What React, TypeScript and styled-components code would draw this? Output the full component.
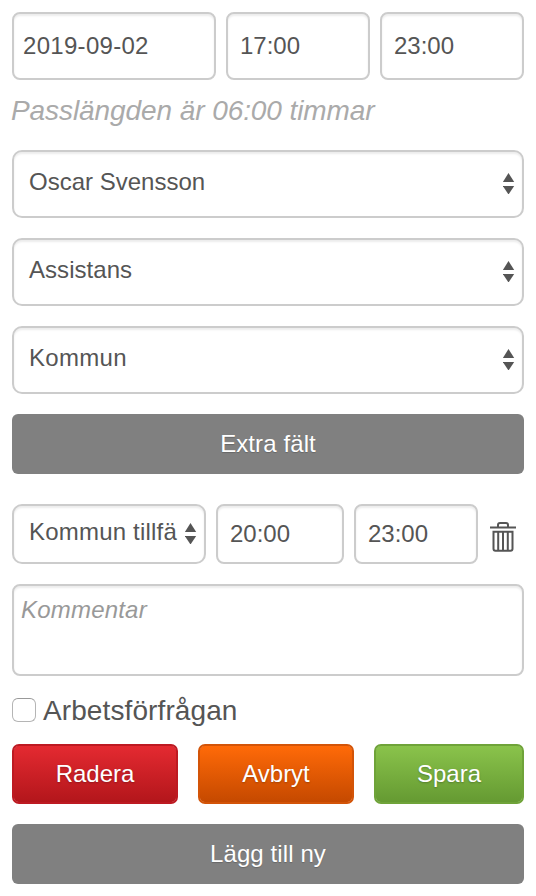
import styled, { createGlobalStyle } from 'styled-components';

const GlobalStyle = createGlobalStyle`
  * {
    box-sizing: border-box;
  }

  body {
    margin: 0;
    background: #fff;
    color: #555;
    font-family: 'Liberation Sans', Arial, sans-serif;
    font-size: 24px;
  }
`;

const Form = styled.form`
  display: flex;
  flex-direction: column;
  width: 536px;
  height: 896px;
  padding: 12px;
`;

const Row = styled.div<{ $gap: number }>`
  display: flex;
  gap: ${({ $gap }) => $gap}px;
`;

const Field = styled.div<{ $width?: number; $height: number; $indent?: number }>`
  width: ${({ $width }) => ($width ? `${$width}px` : '100%')};
  height: ${({ $height }) => $height}px;
  flex: none;
  display: flex;
  align-items: center;
  padding: 0 0 0 ${({ $indent = 12 }) => $indent}px;
  border: 2px solid #ccc;
  border-radius: 8px;
  background: #fff;
  box-shadow: inset 0 2px 2px rgba(0, 0, 0, 0.075);
  white-space: nowrap;
`;

const SelectField = styled(Field)`
  justify-content: space-between;
  padding: 0 7px 4px 15px;
  border-radius: 10px;

  svg {
    flex: none;
    margin-top: 3px;
  }
`;

const Label = styled.span<{ $spacing?: number }>`
  letter-spacing: ${({ $spacing = 0 }) => $spacing}px;
`;

const SelectStack = styled.div`
  display: flex;
  flex-direction: column;
  gap: 20px;
  margin-bottom: 20px;
`;

const Summary = styled.p`
  height: 70px;
  margin: 0 0 0 -1px;
  padding-top: 15px;
  color: #aaa;
  font-size: 28px;
  font-style: italic;
  line-height: 32px;
  letter-spacing: -0.08px;
  white-space: nowrap;
`;

const WideButton = styled.button`
  width: 100%;
  height: 60px;
  flex: none;
  padding: 0;
  border: 0;
  border-radius: 6px;
  background: #808080;
  color: #fff;
  font: inherit;
  letter-spacing: 0.1px;
  text-shadow: 0 1px 1px rgba(0, 0, 0, 0.2);
`;

const ExtraRow = styled(Row)`
  margin: 30px 0 20px;
`;

const DeleteButton = styled.button`
  width: 26px;
  height: 60px;
  margin-left: 2px;
  padding: 5px 0 0;
  border: 0;
  background: none;
  color: #555;

  svg {
    display: block;
  }
`;

const Comment = styled(Field)`
  align-items: flex-start;
  padding: 10px 0 0 7px;
  color: #999;
  font-style: italic;
`;

const CheckRow = styled.label`
  display: flex;
  align-items: center;
  gap: 7px;
  height: 68px;
  font-size: 28px;

  span {
    padding-top: 2px;
  }
`;

const Checkbox = styled.input`
  appearance: none;
  width: 24px;
  height: 24px;
  margin: 0;
  border: 1px solid #b5b5b5;
  border-top-color: #999;
  border-radius: 6px;
  background: #fff;
`;

const ActionButton = styled.button<{ $width: number; $from: string; $to: string; $border: string }>`
  width: ${({ $width }) => $width}px;
  height: 60px;
  padding: 0;
  border: 2px solid ${({ $border }) => $border};
  border-radius: 7px;
  background: linear-gradient(${({ $from, $to }) => `${$from}, ${$to}`}) padding-box ${({ $border }) => $border};
  color: #fff;
  font: inherit;
  text-shadow: 0 1px 2px rgba(0, 0, 0, 0.25);
`;

const Actions = styled(Row)`
  margin-bottom: 20px;
`;

const SelectArrows = () => (
  <svg width="12" height="21" viewBox="0 0 12 21" fill="#555">
    <path d="M5.5 0 11.2 9H-.2Z" />
    <path d="M-.2 13h11.4L5.5 21.5Z" />
  </svg>
);

const TrashIcon = () => (
  <svg width="26" height="31" viewBox="0 0 26 31" fill="none" stroke="currentColor" strokeWidth="2">
    <path d="M0 6.5h26M8 6V4q0-2 2-2h6q2 0 2 2v2" />
    <path d="M3.5 10.7h19v17.1q0 2-2 2h-15q-2 0-2-2Z" />
    <path d="M8.2 10.7v19M13 10.7v19M17.8 10.7v19" />
  </svg>
);

const selects = [
  { value: 'Oscar Svensson', spacing: 0 },
  { value: 'Assistans', spacing: 0.05 },
  { value: 'Kommun', spacing: 0.3 },
];

export default function App() {
  return (
    <>
      <GlobalStyle />
      <Form onSubmit={(e) => e.preventDefault()}>
        <Row $gap={10}>
          <Field $width={204} $height={68} $indent={9}>
            <Label $spacing={0.3}>2019-09-02</Label>
          </Field>
          <Field $width={144} $height={68}>
            <Label>17:00</Label>
          </Field>
          <Field $width={144} $height={68}>
            <Label>23:00</Label>
          </Field>
        </Row>

        <Summary>Passlängden är 06:00 timmar</Summary>

        <SelectStack>
          {selects.map(({ value, spacing }) => (
            <SelectField key={value} $height={68}>
              <Label $spacing={spacing}>{value}</Label>
              <SelectArrows />
            </SelectField>
          ))}
        </SelectStack>

        <WideButton type="button">Extra fält</WideButton>

        <ExtraRow $gap={10}>
          <SelectField $width={194} $height={60}>
            <Label $spacing={0.2}>Kommun tillfä</Label>
            <SelectArrows />
          </SelectField>
          <Field $width={128} $height={60}>
            <Label>20:00</Label>
          </Field>
          <Field $width={124} $height={60}>
            <Label>23:00</Label>
          </Field>
          <DeleteButton type="button" aria-label="Ta bort">
            <TrashIcon />
          </DeleteButton>
        </ExtraRow>

        <Comment $height={92}>
          <Label $spacing={0.2}>Kommentar</Label>
        </Comment>

        <CheckRow>
          <Checkbox type="checkbox" />
          <Label $spacing={0.1}>Arbetsförfrågan</Label>
        </CheckRow>

        <Actions $gap={20}>
          <ActionButton type="button" $width={166} $from="#e42a31" $to="#b3161b" $border="#bd1a22">
            Radera
          </ActionButton>
          <ActionButton type="button" $width={156} $from="#ff6a08" $to="#c54900" $border="#d35408">
            Avbryt
          </ActionButton>
          <ActionButton type="submit" $width={150} $from="#8ac34b" $to="#659a32" $border="#6fa339">
            Spara
          </ActionButton>
        </Actions>

        <WideButton type="button">Lägg till ny</WideButton>
      </Form>
    </>
  );
}
